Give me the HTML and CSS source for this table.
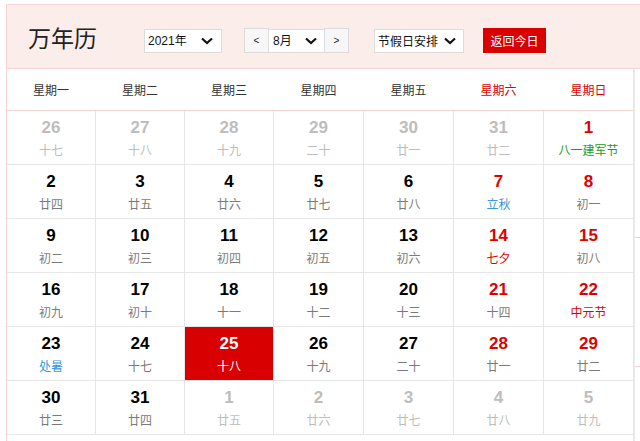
FILE: index.html
```html
<!DOCTYPE html>
<html lang="zh-CN">
<head>
<meta charset="utf-8">
<title>万年历</title>
<link rel="stylesheet" href="styles.css">
</head>
<body>
<div class="cal">
  <div class="head">
    <h1 class="title">万年历</h1>
    <div class="sel sel-year ctl"><span>2021年</span><svg class="chev" width="12" height="8" viewBox="0 0 12 8"><polyline points="1,1.5 6,6 11,1.5" fill="none" stroke="#111" stroke-width="2.2"/></svg></div>
    <div class="month-group ctl">
      <button class="nav">&lt;</button>
      <div class="sel sel-month"><span>8月</span><svg class="chev" width="12" height="8" viewBox="0 0 12 8"><polyline points="1,1.5 6,6 11,1.5" fill="none" stroke="#111" stroke-width="2.2"/></svg></div>
      <button class="nav">&gt;</button>
    </div>
    <div class="sel sel-hol ctl"><span>节假日安排</span><svg class="chev" width="12" height="8" viewBox="0 0 12 8"><polyline points="1,1.5 6,6 11,1.5" fill="none" stroke="#111" stroke-width="2.2"/></svg></div>
    <button class="today-btn ctl">返回今日</button>
  </div>
  <div class="body">
    <div class="main">
      <div class="weekdays">
        <div>星期一</div><div>星期二</div><div>星期三</div><div>星期四</div><div>星期五</div><div class="we">星期六</div><div class="we">星期日</div>
      </div>
      <div class="grid">
        <div class="cell other"><b>26</b><i>十七</i></div>
        <div class="cell other"><b>27</b><i>十八</i></div>
        <div class="cell other"><b>28</b><i>十九</i></div>
        <div class="cell other"><b>29</b><i>二十</i></div>
        <div class="cell other"><b>30</b><i>廿一</i></div>
        <div class="cell other"><b>31</b><i>廿二</i></div>
        <div class="cell red"><b>1</b><i class="fest">八一建军节</i></div>

        <div class="cell"><b>2</b><i>廿四</i></div>
        <div class="cell"><b>3</b><i>廿五</i></div>
        <div class="cell"><b>4</b><i>廿六</i></div>
        <div class="cell"><b>5</b><i>廿七</i></div>
        <div class="cell"><b>6</b><i>廿八</i></div>
        <div class="cell red"><b>7</b><i class="term">立秋</i></div>
        <div class="cell red"><b>8</b><i>初一</i></div>

        <div class="cell"><b>9</b><i>初二</i></div>
        <div class="cell"><b>10</b><i>初三</i></div>
        <div class="cell"><b>11</b><i>初四</i></div>
        <div class="cell"><b>12</b><i>初五</i></div>
        <div class="cell"><b>13</b><i>初六</i></div>
        <div class="cell red"><b>14</b><i class="hol">七夕</i></div>
        <div class="cell red"><b>15</b><i>初八</i></div>

        <div class="cell"><b>16</b><i>初九</i></div>
        <div class="cell"><b>17</b><i>初十</i></div>
        <div class="cell"><b>18</b><i>十一</i></div>
        <div class="cell"><b>19</b><i>十二</i></div>
        <div class="cell"><b>20</b><i>十三</i></div>
        <div class="cell red"><b>21</b><i>十四</i></div>
        <div class="cell red"><b>22</b><i class="hol">中元节</i></div>

        <div class="cell"><b>23</b><i class="term">处暑</i></div>
        <div class="cell"><b>24</b><i>十七</i></div>
        <div class="cell today"><b>25</b><i>十八</i></div>
        <div class="cell"><b>26</b><i>十九</i></div>
        <div class="cell"><b>27</b><i>二十</i></div>
        <div class="cell red"><b>28</b><i>廿一</i></div>
        <div class="cell red"><b>29</b><i>廿二</i></div>

        <div class="cell"><b>30</b><i>廿三</i></div>
        <div class="cell"><b>31</b><i>廿四</i></div>
        <div class="cell other"><b>1</b><i>廿五</i></div>
        <div class="cell other"><b>2</b><i>廿六</i></div>
        <div class="cell other"><b>3</b><i>廿七</i></div>
        <div class="cell other"><b>4</b><i>廿八</i></div>
        <div class="cell other"><b>5</b><i>廿九</i></div>
      </div>
    </div>
    <div class="side">
      <div class="side-line l1"></div>
      <div class="side-line l2"></div>
    </div>
  </div>
</div>
</body>
</html>
```
FILE: styles.css
```css
html, body {
  margin: 0;
  padding: 0;
  background: #fff;
  overflow: hidden;
}
body {
  font-family: "Noto Sans CJK SC", "Liberation Sans", sans-serif;
  color: #333;
}
.cal {
  margin: 4px 0 0 6px;
  width: 634px;
}
.head {
  display: flex;
  align-items: center;
  height: 63px;
  background: #fbeeea;
  border: 1px solid #f4d4d4;
  border-right: none;
}
.title {
  margin: 0 0 0 21px;
  font-size: 23px;
  font-weight: normal;
  color: #222;
  line-height: 30px;
  width: 116px;
}
.ctl {
  margin-top: 8px;
}
.sel {
  box-sizing: border-box;
  display: flex;
  align-items: center;
  justify-content: space-between;
  height: 24px;
  background: #fff;
  border: 1px solid #dcdcdc;
  font-size: 12px;
  color: #111;
  font-family: "Liberation Sans", "Noto Sans CJK SC", sans-serif;
}
.sel span {
  line-height: 22px;
}
.sel-year {
  width: 78px;
  padding: 0 8px 0 3px;
}
.month-group {
  display: flex;
  align-items: center;
  margin-left: 22px;
}
.nav {
  box-sizing: border-box;
  width: 25px;
  height: 25px;
  padding: 0;
  background: #f7f7f7;
  border: 1px solid #dcdcdc;
  font-family: "Liberation Sans", sans-serif;
  font-size: 10px;
  color: #222;
}
.sel-month {
  width: 55px;
  padding: 0 7px 0 4px;
  border-left: none;
  border-right: none;
}
.sel-hol {
  width: 90px;
  margin-left: 25px;
  padding: 0 7px 0 3px;
  font-family: "Noto Sans CJK SC", sans-serif;
}
.today-btn {
  margin-left: 19px;
  height: 25px;
  width: 63px;
  padding: 0;
  border: none;
  background: #d80000;
  color: #fff;
  font-family: "Noto Sans CJK SC", sans-serif;
  font-size: 12px;
}
.body {
  display: flex;
}
.main {
  width: 628px;
  flex: none;
  box-sizing: border-box;
  border-left: 1px solid #f4d4d4;
  border-right: 1px solid #e6e6e6;
}
.weekdays {
  display: grid;
  grid-template-columns: 88px 88px 88px 89px 89px 89px 89px;
  column-gap: 1px;
  height: 41px;
  align-items: center;
  border-bottom: 1px solid #f4d4d4;
  font-size: 12px;
  color: #333;
  text-align: center;
}
.weekdays .we {
  color: #e00000;
}
.grid {
  display: grid;
  grid-template-columns: 88px 88px 88px 89px 89px 89px 89px;
  grid-auto-rows: 53px;
  gap: 1px;
  background: #e6e6e6;
  border-bottom: 1px solid #e6e6e6;
}
.cell {
  background: #fff;
  display: flex;
  flex-direction: column;
  align-items: center;
  padding-top: 7px;
  box-sizing: border-box;
}
.cell b {
  font-family: "Liberation Sans", Arial, sans-serif;
  font-weight: bold;
  font-size: 17px;
  line-height: 20px;
  color: #000;
}
.cell i {
  font-style: normal;
  font-size: 12px;
  line-height: 18px;
  margin-top: 3px;
  color: #7a7a7a;
}
.cell.red b {
  color: #e00000;
}
.cell.other b {
  color: #bdbdbd;
}
.cell.other i {
  color: #bdbdbd;
}
.cell i.fest {
  color: #1d9a1d;
}
.cell i.term {
  color: #3a96d6;
}
.cell i.hol {
  color: #e00000;
}
.cell.today {
  background: #d80000;
}
.cell.today b, .cell.today i {
  color: #fff;
}
.side {
  flex: 1;
  border-left: 1px solid #ececec;
  height: 380px;
  display: flex;
  flex-direction: column;
}
.side-line {
  height: 1px;
  background: #f4d4d4;
}
.side-line.l1 {
  margin-top: 168px;
}
.side-line.l2 {
  margin-top: 128px;
}
```
